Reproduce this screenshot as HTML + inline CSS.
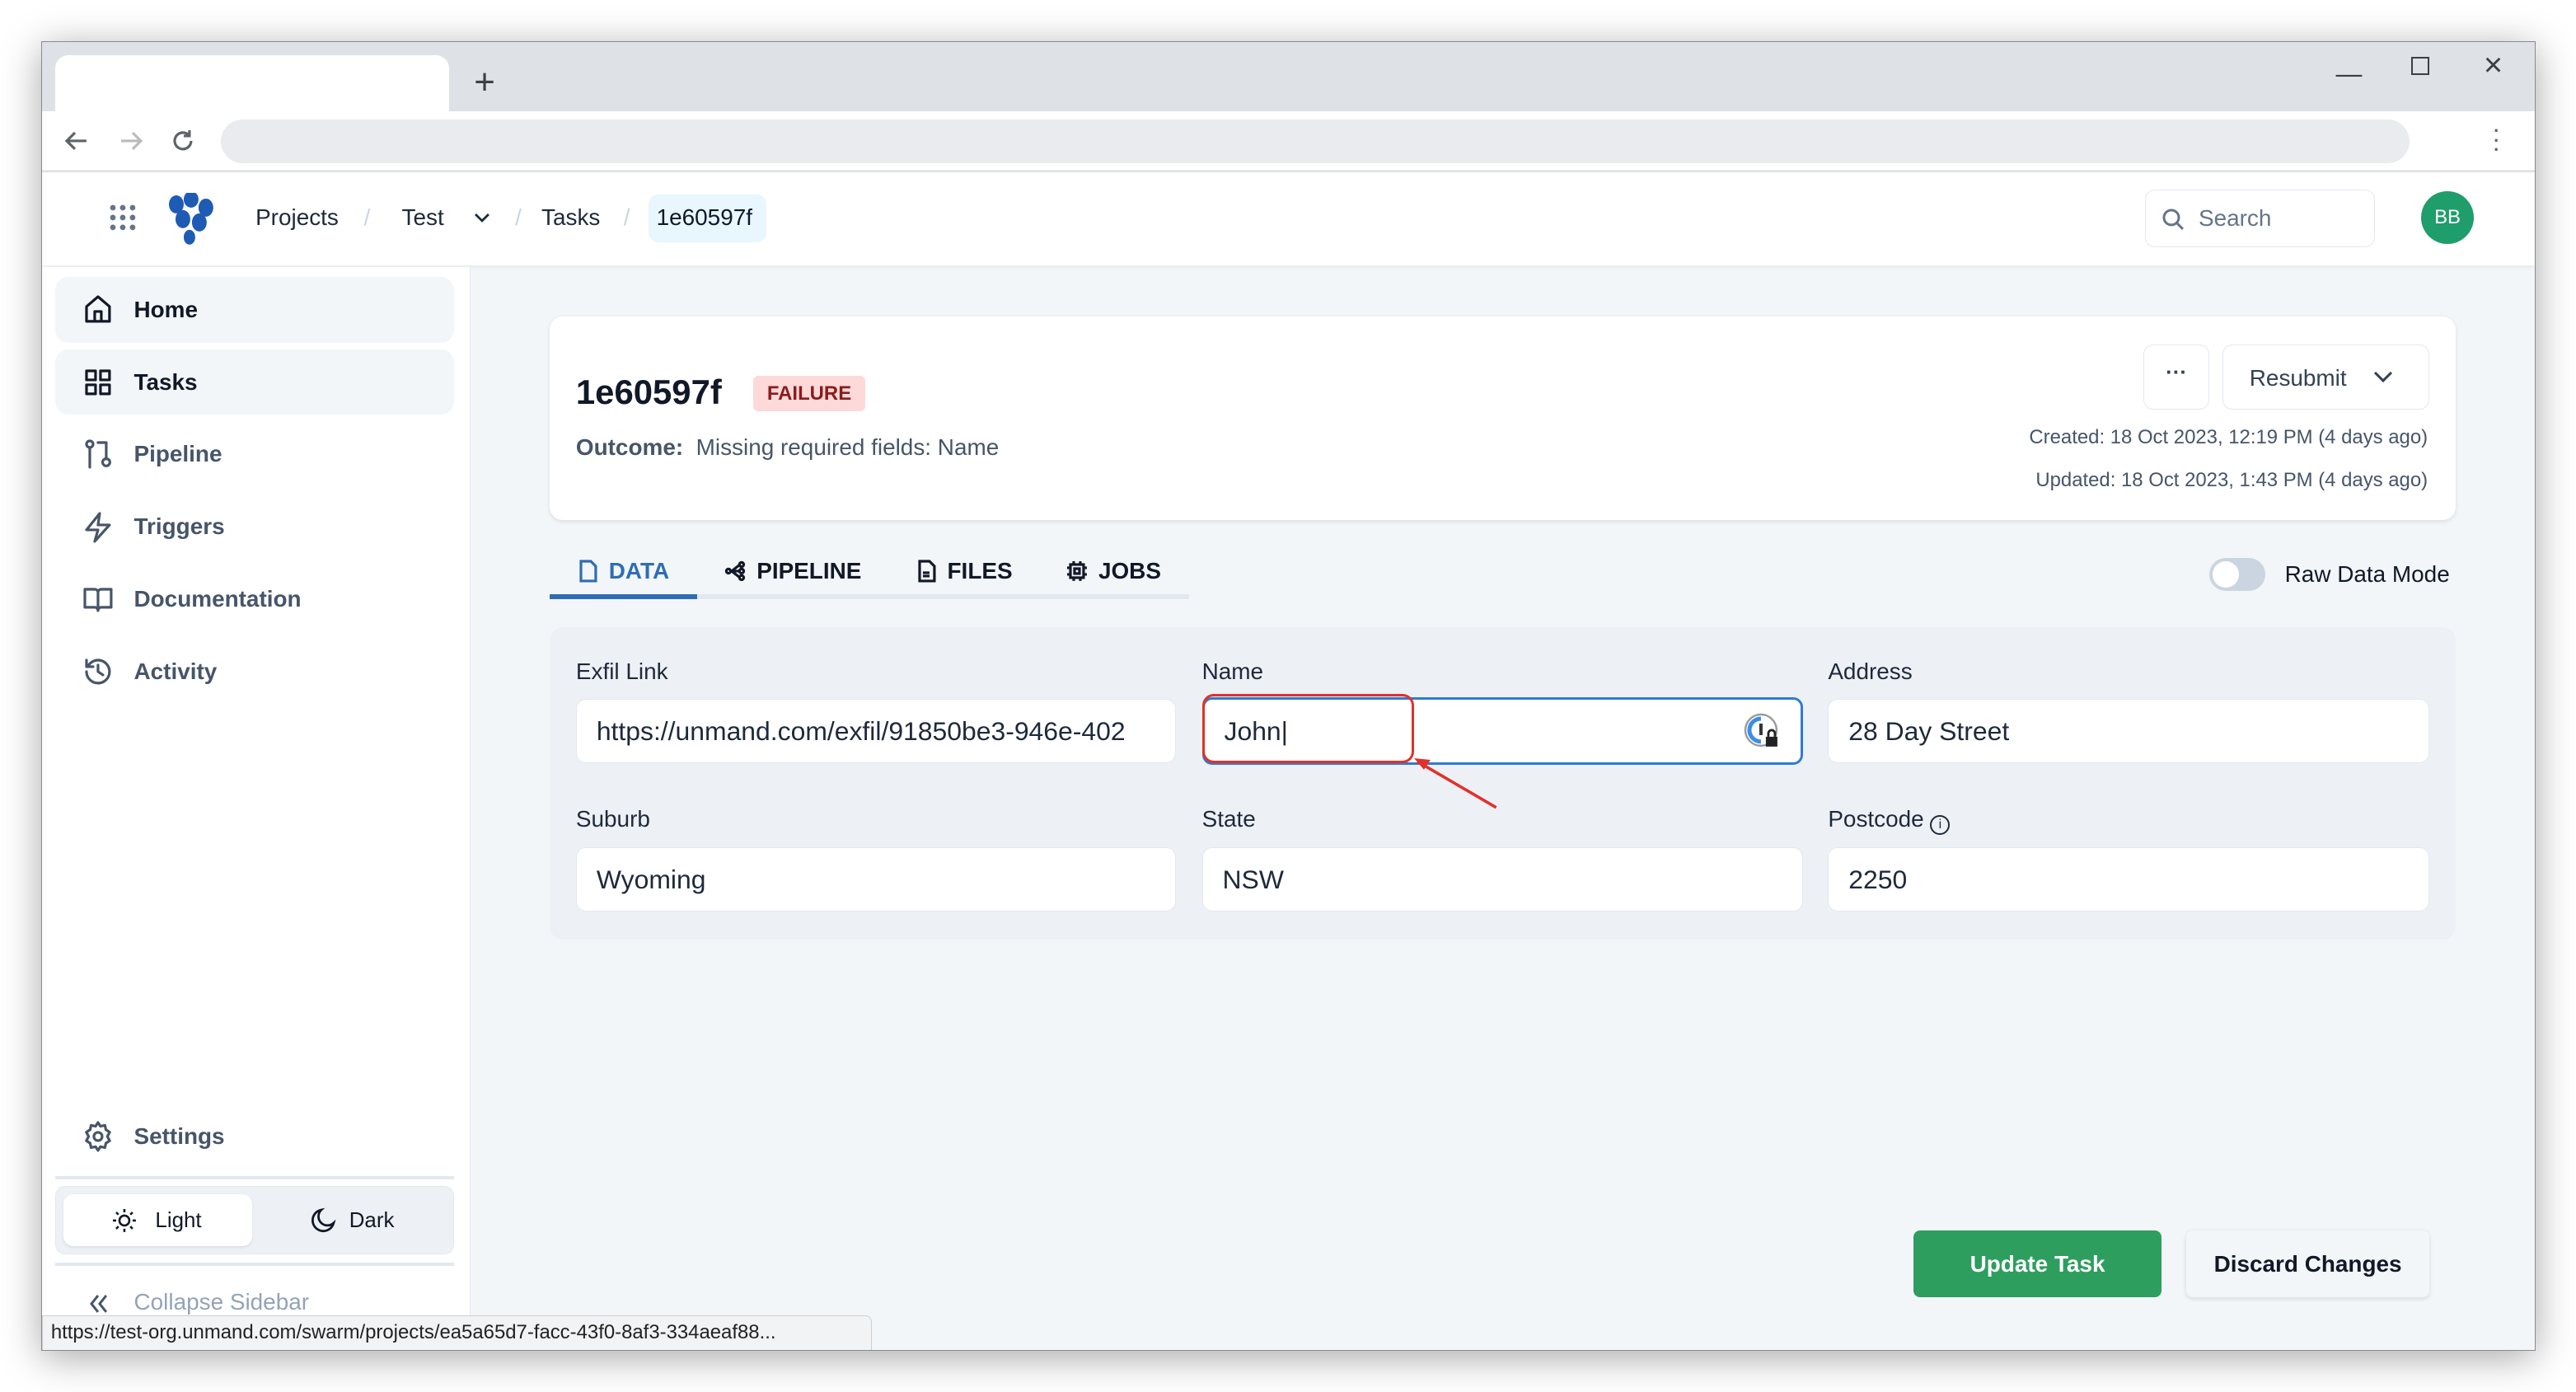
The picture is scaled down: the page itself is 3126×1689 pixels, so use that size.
<!DOCTYPE html>
<html><head><meta charset="utf-8"><style>
*{box-sizing:border-box;margin:0;padding:0}
html,body{width:3126px;height:1688px;overflow:hidden;background:#fff}
body{font-family:"Liberation Sans",sans-serif;color:#1e293b}
#w{position:absolute;left:0;top:0;width:1568px;height:847px;zoom:1.994}
.a{position:absolute}
.win{left:25px;top:25px;width:1518px;height:797px;background:#f3f6f9;box-shadow:0 4px 22px rgba(0,0,0,.35);border:1px solid #8a8a8a;overflow:hidden}
.nav{font-size:14px;color:#475569;display:flex;align-items:center;gap:0}
.nav svg{width:20px;height:20px;fill:none;stroke:#475569;stroke-width:1.6;stroke-linecap:round;stroke-linejoin:round}
.lbl{font-size:14px;color:#1e293b}
.inp{background:#fff;border:1px solid #e2e8f0;border-radius:6px;height:39px;font-size:16px;color:#1e293b;padding:10px 12px;white-space:nowrap;overflow:hidden}
.tab{font-size:14px;font-weight:bold;display:flex;align-items:center;gap:6px;color:#111827}
.tab svg{width:14px;height:14px;fill:none;stroke:currentColor;stroke-width:1.6}
</style></head><body><div id="w">
<div class="a win">
 <div class="a" style="left:0;top:0;width:1518px;height:42px;background:#dee1e6"></div>
 <div class="a" style="left:8px;top:8px;width:240px;height:34px;background:#fff;border-radius:8px 8px 0 0"></div>
 <div class="a" style="left:263px;top:12px;font-size:22px;color:#3c4043">+</div>
 <div class="a" style="left:1396px;top:10px;font-size:16px;color:#3c4043">&#8212;</div>
 <div class="a" style="left:1442px;top:9px;width:11px;height:11px;border:1.5px solid #3c4043"></div>
 <div class="a" style="left:1486px;top:3px;font-size:20px;color:#3c4043">&#215;</div>
 <div class="a" style="left:0;top:42px;width:1518px;height:37px;background:#fff;border-bottom:1px solid #c8c8c8"></div>
 <svg class="a" style="left:13px;top:52px" width="16" height="16" viewBox="0 0 16 16" fill="none" stroke="#5f6368" stroke-width="1.6"><path d="M14 8H2M7 3L2 8l5 5"/></svg>
 <svg class="a" style="left:46px;top:52px" width="16" height="16" viewBox="0 0 16 16" fill="none" stroke="#bbb" stroke-width="1.6"><path d="M2 8h12M9 3l5 5-5 5"/></svg>
 <svg class="a" style="left:78px;top:52px" width="16" height="16" viewBox="0 0 16 16" fill="none" stroke="#5f6368" stroke-width="1.6"><path d="M13 8a5 5 0 11-1.5-3.6"/><path d="M12 1.5v3.5H8.5" /></svg>
 <div class="a" style="left:109px;top:47px;width:1332px;height:27px;background:#e9ebee;border-radius:14px"></div>
 <div class="a" style="left:1491px;top:50px;font-size:16px;color:#5f6368;line-height:6px">&#183;<br>&#183;<br>&#183;</div>
 <div class="a" style="left:0;top:80px;width:1518px;height:56px;background:#fff;box-shadow:0 1px 3px rgba(0,0,0,.06)"></div>
 <svg class="a" style="left:40px;top:98px" width="18" height="18" viewBox="0 0 18 18" fill="#64748b"><circle cx="3" cy="3" r="1.7"/><circle cx="9" cy="3" r="1.7"/><circle cx="15" cy="3" r="1.7"/><circle cx="3" cy="9" r="1.7"/><circle cx="9" cy="9" r="1.7"/><circle cx="15" cy="9" r="1.7"/><circle cx="3" cy="15" r="1.7"/><circle cx="9" cy="15" r="1.7"/><circle cx="15" cy="15" r="1.7"/></svg>
 <svg class="a" style="left:76px;top:92px" width="30" height="32" viewBox="0 0 30 32" fill="#1e5bb5"><ellipse cx="6" cy="7" rx="4.5" ry="5.5"/><ellipse cx="15" cy="4" rx="4.5" ry="5"/><ellipse cx="24" cy="9" rx="4.5" ry="5.5"/><ellipse cx="10" cy="16" rx="4.5" ry="5.5"/><ellipse cx="20" cy="18" rx="4.5" ry="5.5"/><ellipse cx="14" cy="27" rx="3.5" ry="4.5"/></svg>
 <div class="a" style="left:130px;top:99px;font-size:14px;color:#1e293b">Projects</div>
 <div class="a" style="left:196px;top:99px;font-size:14px;color:#cbd5e1">/</div>
 <div class="a" style="left:219px;top:99px;font-size:14px;color:#1e293b">Test</div>
 <svg class="a" style="left:263px;top:103px" width="10" height="8" viewBox="0 0 10 8" fill="none" stroke="#1e293b" stroke-width="1.4"><path d="M1 2l4 4 4-4"/></svg>
 <div class="a" style="left:288px;top:99px;font-size:14px;color:#cbd5e1">/</div>
 <div class="a" style="left:304px;top:99px;font-size:14px;color:#1e293b">Tasks</div>
 <div class="a" style="left:354px;top:99px;font-size:14px;color:#cbd5e1">/</div>
 <div class="a" style="left:369px;top:93px;width:72px;height:29px;background:#e8f6fe;border-radius:6px;font-size:14px;color:#0f172a;padding:6px 5px">1e60597f</div>
 <div class="a" style="left:1280px;top:90px;width:140px;height:35px;border:1px solid #e2e8f0;border-radius:6px;font-size:14px;color:#64748b;padding:9px 0 0 32px">Search</div>
 <svg class="a" style="left:1290px;top:101px" width="14" height="14" viewBox="0 0 14 14" fill="none" stroke="#64748b" stroke-width="1.5"><circle cx="6" cy="6" r="4.5"/><path d="M9.5 9.5L13 13"/></svg>
 <div class="a" style="left:1448px;top:91px;width:32px;height:32px;border-radius:50%;background:#1f9d6a;color:#fff;font-size:12px;text-align:center;line-height:32px">BB</div>
 <div class="a" style="left:0;top:137px;width:261px;height:660px;background:#fff;border-right:1px solid #e2e8f0"></div>
 <div class="a" style="left:8px;top:143px;width:243px;height:40px;background:#f3f6f9;border-radius:8px"></div>
 <div class="a" style="left:8px;top:187px;width:243px;height:40px;background:#f3f6f9;border-radius:8px"></div>
 <div class="a nav" style="left:24px;top:153px"><svg viewBox="0 0 20 20" style="stroke:#111827"><path d="M3 17V8l7-6 7 6v9zM8 17v-6h4v6"/></svg><span style="margin-left:12px;color:#111827;font-weight:bold">Home</span></div>
 <div class="a nav" style="left:24px;top:197px"><svg viewBox="0 0 20 20" style="stroke:#111827"><rect x="3" y="3" width="5.5" height="5.5"/><rect x="11.5" y="3" width="5.5" height="5.5"/><rect x="3" y="11.5" width="5.5" height="5.5"/><rect x="11.5" y="11.5" width="5.5" height="5.5"/></svg><span style="margin-left:12px;color:#111827;font-weight:bold">Tasks</span></div>
 <div class="a nav" style="left:24px;top:241px"><svg viewBox="0 0 20 20"><circle cx="5" cy="4" r="2"/><path d="M5 6v12M10 3h5v10"/><circle cx="15" cy="15" r="2.2"/></svg><span style="margin-left:12px;font-weight:bold">Pipeline</span></div>
 <div class="a nav" style="left:24px;top:285px"><svg viewBox="0 0 20 20"><path d="M11 2L3 12h7l-2 7 9-10h-7l1-7z"/></svg><span style="margin-left:12px;font-weight:bold">Triggers</span></div>
 <div class="a nav" style="left:24px;top:329px"><svg viewBox="0 0 20 20"><path d="M2 4h6a2 2 0 012 2v11a2 2 0 00-2-2H2zM18 4h-6a2 2 0 00-2 2v11a2 2 0 012-2h6z"/></svg><span style="margin-left:12px;font-weight:bold">Documentation</span></div>
 <div class="a nav" style="left:24px;top:373px"><svg viewBox="0 0 20 20"><path d="M3 10a7 7 0 107-7 7 7 0 00-6 3.5M3 3v4h4M10 6v4l3 2"/></svg><span style="margin-left:12px;font-weight:bold">Activity</span></div>
 <div class="a nav" style="left:24px;top:656px"><svg viewBox="0 0 20 20"><circle cx="10" cy="10" r="2.5"/><path d="M10 1.5l1.5 2.3 2.7-.6.6 2.7 2.3 1.5-1.4 2.6 1.4 2.6-2.3 1.5-.6 2.7-2.7-.6L10 18.5l-1.5-2.3-2.7.6-.6-2.7L2.9 12.6 4.3 10 2.9 7.4l2.3-1.5.6-2.7 2.7.6z"/></svg><span style="margin-left:12px;font-weight:bold">Settings</span></div>
 <div class="a" style="left:8px;top:690px;width:243px;height:2px;background:#e2e8f0"></div>
 <div class="a" style="left:8px;top:696px;width:243px;height:42px;background:#edf1f6;border:1px solid #e2e8f0;border-radius:6px"></div>
 <div class="a" style="left:13px;top:701px;width:115px;height:32px;background:#fff;border-radius:6px;box-shadow:0 1px 2px rgba(0,0,0,.08);font-size:13px;color:#111827;padding:9px 0 0 56px">Light</div>
 <svg class="a" style="left:42px;top:709px" width="16" height="16" viewBox="0 0 16 16" fill="none" stroke="#111827" stroke-width="1.3"><circle cx="8" cy="8" r="3"/><path d="M8 1v2M8 13v2M1 8h2M13 8h2M3 3l1.4 1.4M11.6 11.6L13 13M3 13l1.4-1.4M11.6 4.4L13 3"/></svg>
 <svg class="a" style="left:163px;top:709px" width="16" height="16" viewBox="0 0 16 16" fill="none" stroke="#111827" stroke-width="1.4"><path d="M7 1.5a6.5 6.5 0 107.5 8A5 5 0 017 1.5z"/></svg>
 <div class="a" style="left:187px;top:710px;font-size:13px;color:#111827">Dark</div>
 <div class="a" style="left:8px;top:743px;width:243px;height:2px;background:#e2e8f0"></div>
 <svg class="a" style="left:27px;top:761px" width="14" height="14" viewBox="0 0 14 14" fill="none" stroke="#475569" stroke-width="1.5"><path d="M7 2L3 7l4 5M12 2L8 7l4 5"/></svg>
 <div class="a" style="left:56px;top:759px;font-size:14px;color:#94a3b8">Collapse Sidebar</div>
 <div class="a" style="left:0;top:775px;width:505px;height:22px;background:#f1f3f4;border:1px solid #cfcfcf;border-radius:0 4px 0 0;font-size:12px;color:#222;padding:3px 5px;white-space:nowrap">https://test-org.unmand.com/swarm/projects/ea5a65d7-facc-43f0-8af3-334aeaf88...</div>
 <div class="a" style="left:309px;top:167px;width:1160px;height:124px;background:#fff;border-radius:8px;box-shadow:0 1px 3px rgba(0,0,0,.1)"></div>
 <div class="a" style="left:325px;top:201px;font-size:21px;font-weight:bold;color:#111827">1e60597f</div>
 <div class="a" style="left:433px;top:203px;width:68px;height:22px;background:#fdd9d9;border-radius:3px;font-size:12px;font-weight:bold;color:#8b1c1c;text-align:center;line-height:22px">FAILURE</div>
 <div class="a" style="left:325px;top:239px;font-size:14px;color:#475569"><b>Outcome:</b>&nbsp; Missing required fields: Name</div>
 <div class="a" style="left:1279px;top:184px;width:40px;height:40px;border:1px solid #e2e8f0;border-radius:6px;text-align:center;font-size:13px;line-height:34px;color:#334155;font-weight:bold">&#183;&#183;&#183;</div>
 <div class="a" style="left:1327px;top:184px;width:126px;height:40px;border:1px solid #e2e8f0;border-radius:6px;font-size:14px;color:#334155;padding:12px 0 0 16px">Resubmit</div>
 <svg class="a" style="left:1419px;top:199px" width="12" height="9" viewBox="0 0 12 9" fill="none" stroke="#334155" stroke-width="1.5"><path d="M1 2l5 5 5-5"/></svg>
 <div class="a" style="left:1100px;top:234px;width:352px;text-align:right;font-size:12px;color:#475569">Created: 18 Oct 2023, 12:19 PM (4 days ago)</div>
 <div class="a" style="left:1100px;top:260px;width:352px;text-align:right;font-size:12px;color:#475569">Updated: 18 Oct 2023, 1:43 PM (4 days ago)</div>
 <div class="a" style="left:309px;top:336px;width:389px;height:3px;background:#e2e8f0"></div>
 <div class="a" style="left:309px;top:336px;width:90px;height:3px;background:#2f6db3"></div>
 <div class="a tab" style="left:325px;top:314px;color:#2f6db3"><svg viewBox="0 0 14 14"><path d="M3 1h6l3 3v9H3z"/></svg>DATA</div>
 <div class="a tab" style="left:415px;top:314px"><svg viewBox="0 0 14 14"><circle cx="3" cy="7" r="1.3"/><circle cx="11" cy="3" r="1.3"/><circle cx="11" cy="7" r="1.3"/><circle cx="11" cy="11" r="1.3"/><path d="M4 7h6M5 7l5-4M5 7l5 4"/></svg>PIPELINE</div>
 <div class="a tab" style="left:531px;top:314px"><svg viewBox="0 0 14 14"><path d="M3 1h6l3 3v9H3zM5 8h4M5 10h4"/></svg>FILES</div>
 <div class="a tab" style="left:623px;top:314px"><svg viewBox="0 0 14 14"><rect x="3" y="3" width="8" height="8"/><rect x="5.5" y="5.5" width="3" height="3"/><path d="M5 1v2M9 1v2M5 11v2M9 11v2M1 5h2M1 9h2M11 5h2M11 9h2"/></svg>JOBS</div>
 <div class="a" style="left:1319px;top:314px;width:34px;height:20px;background:#cbd5e1;border-radius:10px"></div>
 <div class="a" style="left:1321px;top:316px;width:16px;height:16px;background:#fff;border-radius:50%"></div>
 <div class="a" style="left:1365px;top:316px;font-size:14px;color:#111827">Raw Data Mode</div>
 <div class="a" style="left:309px;top:356px;width:1160px;height:190px;background:#edf1f6;border-radius:8px"></div>
 <div class="a lbl" style="left:325px;top:375px">Exfil Link</div>
 <div class="a lbl" style="left:706px;top:375px">Name</div>
 <div class="a lbl" style="left:1087px;top:375px">Address</div>
 <div class="a inp" style="left:325px;top:400px;width:365px">https://unmand.com/exfil/91850be3-946e-402</div>
 <div class="a inp" style="left:706px;top:399px;width:366px;height:41px;border:2px solid #2f7bd0">John|</div>
 <svg class="a" style="left:1035px;top:408px" width="24" height="24" viewBox="0 0 24 24"><circle cx="11" cy="11" r="9.5" fill="#fff" stroke="#999" stroke-width="1.2"/><path d="M11 4a7 7 0 100 14" fill="none" stroke="#3a8ee6" stroke-width="2.5"/><rect x="10" y="7" width="2" height="7" fill="#333"/><rect x="14" y="15" width="7" height="6" fill="#222"/><path d="M15.5 15v-2a2 2 0 014 0v2" fill="none" stroke="#222" stroke-width="1.4"/></svg>
 <div class="a inp" style="left:1087px;top:400px;width:366px">28 Day Street</div>
 <div class="a" style="left:706px;top:397px;width:129px;height:42px;border:2px solid #e3302a;border-radius:7px"></div>
 <svg class="a" style="left:830px;top:430px" width="60" height="40" viewBox="0 0 60 40"><path d="M55 36L7 8" stroke="#e3302a" stroke-width="1.8" fill="none"/><path d="M5 6l10 1-4 6z" fill="#e3302a"/></svg>
 <div class="a lbl" style="left:325px;top:465px">Suburb</div>
 <div class="a lbl" style="left:706px;top:465px">State</div>
 <div class="a lbl" style="left:1087px;top:465px">Postcode <span style="display:inline-block;width:12px;height:12px;border:1.2px solid #1e293b;border-radius:50%;font-size:8px;text-align:center;line-height:10px;vertical-align:-1px">i</span></div>
 <div class="a inp" style="left:325px;top:490px;width:365px">Wyoming</div>
 <div class="a inp" style="left:706px;top:490px;width:366px">NSW</div>
 <div class="a inp" style="left:1087px;top:490px;width:366px">2250</div>
 <div class="a" style="left:1139px;top:723px;width:151px;height:41px;background:#2e9e5e;border-radius:4px;color:#fff;font-size:14px;font-weight:bold;text-align:center;line-height:41px">Update Task</div>
 <div class="a" style="left:1305px;top:723px;width:148px;height:41px;background:#f3f6f9;border-radius:4px;box-shadow:0 1px 3px rgba(0,0,0,.12);color:#111827;font-size:14px;font-weight:bold;text-align:center;line-height:41px">Discard Changes</div>
</div>
</div></body></html>
